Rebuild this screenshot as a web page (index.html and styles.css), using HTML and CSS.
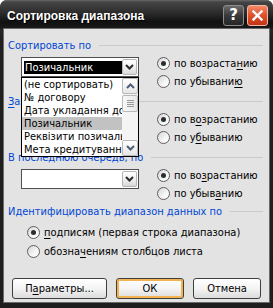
FILE: index.html
```html
<!DOCTYPE html>
<html lang="ru">
<head>
  <meta charset="UTF-8" />
  <title>Сортировка диапазона</title>
  <link rel="stylesheet" href="styles.css">
</head>
<body>
  <div class="window">
    <div class="titlebar">
      <span class="title">Сортировка диапазона</span>
      <div class="caption-buttons">
        <button class="cap-btn help">?</button>
        <button class="cap-btn close">
          <svg width="11" height="11" viewBox="0 0 11 11"><path d="M1.5 1.5 L9.5 9.5 M9.5 1.5 L1.5 9.5" stroke="#fff" stroke-width="2.4" stroke-linecap="square"/></svg>
        </button>
      </div>
    </div>

    <div class="client">
      <div class="legend first"><span>Сортировать по</span><i></i></div>
      <div class="sort-row">
        <div class="combo-wrap open">
          <div class="combo">
            <span class="combo-text"><span class="selected">Позичальник</span></span>
            <span class="combo-btn"><svg width="9" height="6" viewBox="0 0 9 6"><path d="M1 1 L4.5 4.5 L8 1" fill="none" stroke="#2b2b2b" stroke-width="2"/></svg></span>
          </div>
          <div class="dropdown">
            <div class="items">
              <div class="item">(не сортировать)</div>
              <div class="item">№ договору</div>
              <div class="item">Дата укладання договору</div>
              <div class="item hover">Позичальник</div>
              <div class="item">Реквізити позичальника</div>
              <div class="item">Мета кредитування</div>
            </div>
            <div class="scrollbar">
              <div class="sb-btn"><svg width="9" height="6" viewBox="0 0 9 6"><path d="M1 5 L4.5 1.5 L8 5" fill="none" stroke="#4d5d78" stroke-width="2"/></svg></div>
              <div class="sb-track">
                <div class="sb-thumb"><b></b><b></b><b></b><b></b></div>
              </div>
              <div class="sb-btn"><svg width="9" height="6" viewBox="0 0 9 6"><path d="M1 1 L4.5 4.5 L8 1" fill="none" stroke="#4d5d78" stroke-width="2"/></svg></div>
            </div>
          </div>
        </div>
        <div class="radios">
          <label class="radio checked"><span class="mark"></span><span>по возраста<u>н</u>ию</span></label>
          <label class="radio"><span class="mark"></span><span>по убывани<u>ю</u></span></label>
        </div>
      </div>

      <div class="legend"><span><u>З</u>атем по</span><i></i></div>
      <div class="sort-row">
        <div class="combo-wrap">
          <div class="combo">
            <span class="combo-text"></span>
            <span class="combo-btn"><svg width="9" height="6" viewBox="0 0 9 6"><path d="M1 1 L4.5 4.5 L8 1" fill="none" stroke="#2b2b2b" stroke-width="2"/></svg></span>
          </div>
        </div>
        <div class="radios">
          <label class="radio checked"><span class="mark"></span><span>по в<u>о</u>зрастанию</span></label>
          <label class="radio"><span class="mark"></span><span>по у<u>б</u>ыванию</span></label>
        </div>
      </div>

      <div class="legend"><span>В последнюю очередь, по</span><i></i></div>
      <div class="sort-row">
        <div class="combo-wrap">
          <div class="combo">
            <span class="combo-text"></span>
            <span class="combo-btn"><svg width="9" height="6" viewBox="0 0 9 6"><path d="M1 1 L4.5 4.5 L8 1" fill="none" stroke="#2b2b2b" stroke-width="2"/></svg></span>
          </div>
        </div>
        <div class="radios">
          <label class="radio checked"><span class="mark"></span><span>по во<u>з</u>растанию</span></label>
          <label class="radio"><span class="mark"></span><span>по убыв<u>а</u>нию</span></label>
        </div>
      </div>

      <div class="legend last"><span>Идентифицировать диапазон данных по</span><i></i></div>
      <div class="ident">
        <label class="radio checked"><span class="mark"></span><span><u>п</u>одписям (первая строка диапазона)</span></label>
        <label class="radio"><span class="mark"></span><span>обозна<u>ч</u>ениям столбцов листа</span></label>
      </div>

      <div class="buttons">
        <button class="btn wide">П<u>а</u>раметры...</button>
        <button class="btn default">ОК</button>
        <button class="btn">Отмена</button>
      </div>
    </div>
  </div>
</body>
</html>
```

FILE: styles.css
```css
body {
  margin: 0;
  background: #ffffff;
  font-family: "DejaVu Sans Condensed", "DejaVu Sans", sans-serif;
  font-stretch: condensed;
  font-size: 11px;
  color: #000;
}

u {
  text-decoration: underline;
  text-underline-offset: 2px;
}

.window {
  width: 273px;
  height: 308px;
  background: linear-gradient(#3a3a3a, #202020 40px, #1e1e1e);
  border-radius: 7px 7px 0 0;
  display: flex;
  flex-direction: column;
  overflow: hidden;
}

/* заголовок окна */
.titlebar {
  height: 29px;
  flex: none;
  display: flex;
  align-items: center;
  justify-content: space-between;
  padding: 0 5px 0 7px;
  background: linear-gradient(#6a6a6a 0, #454545 2px, #2e2e2e 12px, #111 22px, #1a1a1a 29px);
}

.title {
  color: #fff;
  font-family: "Liberation Sans", Arial, sans-serif;
  font-stretch: normal;
  font-weight: bold;
  font-size: 12px;
  text-shadow: 1px 1px 0 #000;
  margin-top: 2px;
}

.caption-buttons {
  display: flex;
  gap: 3px;
  margin-top: 1px;
}

.cap-btn {
  width: 21px;
  height: 21px;
  padding: 0;
  border-radius: 3px;
  display: grid;
  place-items: center;
}

.cap-btn.help {
  border: 1px solid #8c8c8c;
  background: linear-gradient(#6a6a6a, #3a3a3a 50%, #262626);
  color: #fff;
  font-family: "DejaVu Sans", sans-serif;
  font-weight: bold;
  font-size: 15px;
  line-height: 1;
}

.cap-btn.close {
  border: 1px solid #f0b8a8;
  background: linear-gradient(#f48a68, #e2532f 45%, #c23414);
}

/* рабочая область */
.client {
  flex: 1;
  margin: 0 4px 6px 4px;
  background: #e3e3e3;
  padding: 9px 6px 0 4px;
  box-shadow: 0 0 0 1px #6a6a6a;
}

.legend {
  display: flex;
  align-items: center;
  height: 14px;
  margin-top: 4px;
  color: #0046d5;
  white-space: nowrap;
}

.legend.first {
  margin-top: 0;
}

.legend.last {
  margin-top: 2px;
}

.legend i {
  flex: 1;
  height: 1px;
  margin-left: 8px;
  margin-top: 1px;
  background: #cbcbcb;
}

.sort-row {
  display: flex;
  margin-top: 2px;
  padding-left: 13px;
}

.combo-wrap {
  position: relative;
  margin-top: 3px;
}

.combo-wrap.open {
  z-index: 5;
}

.combo {
  width: 118px;
  height: 20px;
  box-sizing: border-box;
  border: 1px solid #4f4f4f;
  background: #fff;
  display: flex;
  align-items: center;
  padding: 0 1px 0 2px;
}

.combo-text {
  flex: 1;
  height: 13px;
  display: flex;
}

.combo-text .selected {
  flex: 1;
  background: #000;
  color: #fff;
  line-height: 13px;
  padding-left: 1px;
}

.combo-btn {
  width: 15px;
  height: 16px;
  box-sizing: border-box;
  border: 1px solid #b5b5b5;
  border-radius: 2px;
  background: linear-gradient(#ffffff, #ececec 60%, #d8d8d8);
  display: grid;
  place-items: center;
}

/* раскрытый список */
.dropdown {
  position: absolute;
  top: 20px;
  left: 0;
  width: 118px;
  height: 80px;
  box-sizing: border-box;
  border: 1px solid #000;
  background: #fff;
  display: flex;
}

.items {
  flex: 1;
  min-width: 0;
  overflow: hidden;
}

.item {
  height: 13px;
  line-height: 13px;
  padding-left: 2px;
  white-space: nowrap;
  overflow: hidden;
}

.item.hover {
  background: #c2c2c2;
}

.scrollbar {
  width: 16px;
  flex: none;
  display: flex;
  flex-direction: column;
  background: #f4f4f4;
}

.sb-btn {
  height: 16px;
  box-sizing: border-box;
  border: 1px solid #b9b9b9;
  border-radius: 2px;
  background: linear-gradient(#ffffff, #e6e6e6);
  display: grid;
  place-items: center;
}

.sb-track {
  flex: 1;
  padding-top: 1px;
}

.sb-thumb {
  height: 17px;
  box-sizing: border-box;
  border: 1px solid #b9b9b9;
  border-radius: 2px;
  background: linear-gradient(90deg, #f8f8f8, #e8e8e8);
  display: flex;
  flex-direction: column;
  align-items: center;
  justify-content: center;
  gap: 1px;
}

.sb-thumb b {
  width: 7px;
  height: 1px;
  background: #9a9a9a;
}

/* переключатели */
.radios {
  margin-left: 18px;
}

.radio {
  display: flex;
  align-items: center;
  gap: 4px;
  height: 18px;
  white-space: nowrap;
}

.mark {
  width: 13px;
  height: 13px;
  box-sizing: border-box;
  border: 1px solid #5e5e5e;
  border-radius: 50%;
  background: linear-gradient(135deg, #d4d4d4, #f6f6f6 60%, #ffffff);
  display: grid;
  place-items: center;
}

.radio.checked .mark::after {
  content: "";
  width: 5px;
  height: 5px;
  border-radius: 50%;
  background: #2e2e2e;
}

.ident {
  margin-top: 5px;
  padding-left: 19px;
}

.ident .radio {
  height: 19px;
}

/* кнопки */
.buttons {
  display: flex;
  gap: 9px;
  margin-top: 17px;
  padding-left: 4px;
}

.btn {
  width: 68px;
  height: 21px;
  padding: 0;
  border: 1px solid #3f3f3f;
  border-radius: 3px;
  background: linear-gradient(#ffffff, #f4f4f4 50%, #dcdcdc);
  font: inherit;
  color: #000;
}

.btn.wide {
  width: 95px;
}

.btn.default {
  box-shadow: inset 0 0 0 2px #f2b450;
}
```
